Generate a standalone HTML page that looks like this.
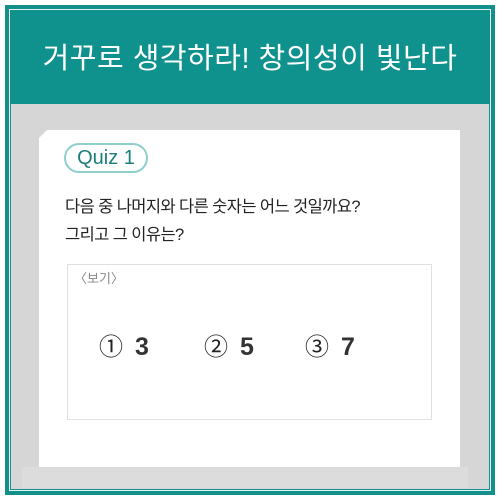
<!DOCTYPE html>
<html><head><meta charset="utf-8"><style>
*{margin:0;padding:0;box-sizing:border-box}
body{width:500px;height:499px;background:#fff;position:relative;overflow:hidden;font-family:"Liberation Sans","Noto Sans CJK KR",sans-serif}
.outer{position:absolute;left:5px;top:5px;width:490px;height:490px;background:#14908c;}
.wline{position:absolute;left:9px;top:9px;width:482px;height:482px;border:1.5px solid #e8f4f3;}
.inner{position:absolute;left:11px;top:11px;width:478px;height:478px;background:#d6d6d6;}
.head{position:absolute;left:0;top:0;width:478px;height:93px;background:#0f918d;color:#fff;font-size:29px;text-align:center;line-height:96px;letter-spacing:0.5px}
.band{position:absolute;left:22px;top:467px;width:446px;height:21px;background:#dcdcdc}
.card{position:absolute;left:39px;top:130px;width:421px;height:337px;background:#fff;clip-path:polygon(8px 0,100% 0,100% 100%,0 100%,0 8px);box-shadow:0 0 6px rgba(0,0,0,.15)}
.pill{position:absolute;left:64px;top:143px;width:84px;height:30px;border:2px solid #8fcfcb;border-radius:15px;color:#1a7f7b;font-size:20px;text-align:center;line-height:26px}
.q{position:absolute;left:65px;font-size:16.5px;color:#222;letter-spacing:-0.6px}
.box{position:absolute;left:67px;top:264px;width:365px;height:156px;border:1px solid #e0e0e0}
.bogi{position:absolute;left:74px;top:268px;font-size:13px;color:#888}
.opt{position:absolute;top:327px;font-size:24px;color:#222}
.opt b{font-size:25px;margin-left:12px;color:#333}
</style></head><body>
<div class="outer"></div><div class="wline"></div>
<div class="inner"><div class="head">거꾸로 생각하라! 창의성이 빛난다</div></div>
<div class="band"></div>
<div class="card"></div>
<div class="pill">Quiz 1</div>
<div class="q" style="top:193px">다음 중 나머지와 다른 숫자는 어느 것일까요?</div>
<div class="q" style="top:221px">그리고 그 이유는?</div>
<div class="box"></div>
<div class="bogi">〈보기〉</div>
<div class="opt" style="left:99px">①<b>3</b></div>
<div class="opt" style="left:204px">②<b>5</b></div>
<div class="opt" style="left:305px">③<b>7</b></div>
</body></html>
